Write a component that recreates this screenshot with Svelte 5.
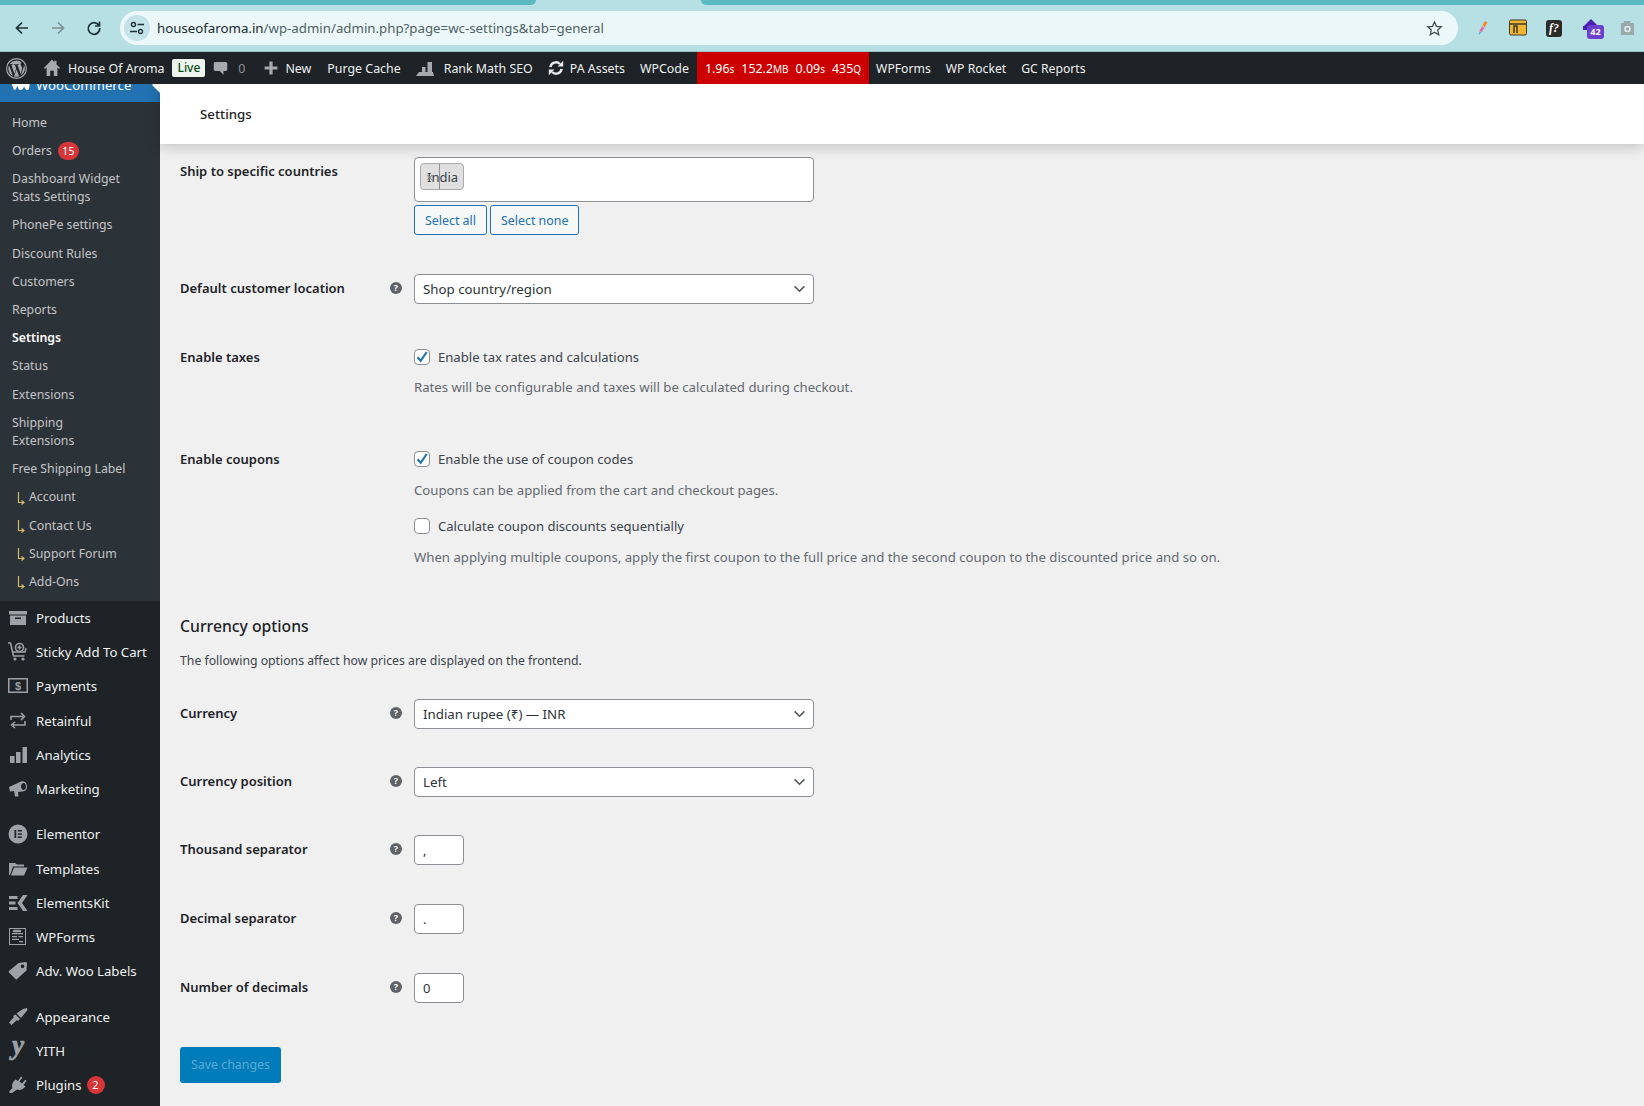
<script>
  const frame = 'fill="currentColor"';
  const line = 'fill="none" stroke="currentColor" stroke-width="1.6"';
  const sub = [
    { label: 'Home' },
    { label: 'Orders', badge: 15 },
    { label: 'Dashboard Widget Stats Settings' },
    { label: 'PhonePe settings' },
    { label: 'Discount Rules' },
    { label: 'Customers' },
    { label: 'Reports' },
    { label: 'Settings', current: true },
    { label: 'Status' },
    { label: 'Extensions' },
    { label: 'Shipping Extensions', narrow: true },
    { label: 'Free Shipping Label' },
    { label: 'Account', child: true },
    { label: 'Contact Us', child: true },
    { label: 'Support Forum', child: true },
    { label: 'Add-Ons', child: true }
  ];

  const menu = [
    { label: 'Products', icon: `<path ${frame} fill-rule="evenodd" d="M1 3h18v3.5H1z M2 7.5h16V17H2z M7 9.5h6V11H7z"/>` },
    { label: 'Sticky Add To Cart', icon: `<g ${line} stroke-width="1.1"><path d="M0 1h2.5l3 13h11M4 10h13l1-4"/><circle cx="11.5" cy="5.5" r="4"/><path d="M11.5 3.5v4M9.5 5.5h4"/></g><circle cx="7" cy="17" r="1.6" fill="currentColor"/><circle cx="15" cy="17" r="1.6" fill="currentColor"/>` },
    { label: 'Payments', icon: `<path ${frame} fill-rule="evenodd" d="M0 2h20v15H0z M1.5 3.500v12h17v-12z"/><text x="10" y="14" text-anchor="middle" font-size="11" font-weight="700" font-family="Liberation Sans" fill="currentColor">$</text>` },
    { label: 'Retainful', icon: `<path ${line} stroke-width="2" d="M3 9V5.500h12M13 2l3.500 3.500L13 9M17 10v4H5M7 11l-3.500 3L7 17"/>` },
    { label: 'Analytics', icon: `<path ${frame} d="M2 11h4.500v7H2z M8 7h4.500v11H8z M14.500 2H19v16h-4.500z"/>` },
    { label: 'Marketing', icon: `<path ${frame} fill-rule="evenodd" d="M1 8l12-5.500c1-.5 2-.5 3 0 2 1 3.500 3 3 6s-3 4-5 4l-4 .5.5 4.500H7L6 12l-4 .5z M15.500 4a2.500 3.500 0 1 0 .1 0z"/>` },
    { label: 'Elementor', gap: true, icon: `<path ${frame} fill-rule="evenodd" d="M10 .5a9.500 9.500 0 1 0 0 19 9.500 9.500 0 0 0 0-19z M6.500 6h1.700v8H6.500z M9.800 6h4v1.500h-4z M9.800 9.200h4v1.500h-4z M9.800 12.500h4V14h-4z"/>` },
    { label: 'Templates', icon: `<path ${frame} d="M1 4h6l2 1.500h7V7.500H5l-3 8.500H1z M6 8.500h13.500L16 16.500H3z"/>` },
    { label: 'ElementsKit', icon: `<path ${frame} d="M1 3h8.500v3H1z M1 8.500h6.500v3H1z M1 14h8.500v3H1z M15 2h4.500l-5.500 8 5.500 8H15l-5.500-8z"/>` },
    { label: 'WPForms', icon: `<path ${frame} fill-rule="evenodd" d="M1 1h17v17H1z M2 2v15h15V2z M4 6h11v1.200H4z M4 9h5v1.200H4z M10.500 9H15v1.200h-4.500z M4 11.800h7v1.200H4z M11 14h4v1.200h-4z"/><path ${line} stroke-width="1" d="M5 3.500l1 1 1-1 1 1 1-1 1 1 1-1 1 1 1-1"/>` },
    { label: 'Adv. Woo Labels', icon: `<path ${frame} fill-rule="evenodd" d="M1 10L10.500 2 18 1l1 1-.5 7.500L9 18c-.5.5-1 .5-1.500 0L1 11.500c-.4-.5-.4-1 0-1.500z M14.500 3.500a1.800 1.800 0 1 0 .1 0z"/>` },
    { label: 'Appearance', gap: true, icon: `<path ${frame} d="M19 1l.5 2-6.500 8-4.500-4.500L15 2z M7.500 7.500l4.500 4.500-2 2-1-1-5.500 5-2.500-2.500 5-5.500-1-1z"/>` },
    { label: 'YITH', icon: `<text x="10" y="13" text-anchor="middle" font-size="27" font-weight="700" font-style="italic" font-family="Liberation Serif" fill="currentColor" stroke="currentColor" stroke-width="0.7">y</text>` },
    { label: 'Plugins', badge: 2, icon: `<path ${frame} d="M13 1.500l1.500 1-3 4 2.500 2 3.200-3.800 1.300 1.300-3 4 2 1.500-1.500 1.500c-2 2-5 2.500-7 1.500L4 18H1.500v-2l3-3c-1-2-.5-5 1.500-7L7.500 4.500 10 6z"/>` }
  ];

  const bar = ['1.96s', '152.2MB', '0.09s', '435Q'];
</script>

{#snippet help()}
  <span class="help">?</span>
{/snippet}

{#snippet chevron()}
  <svg class="chevron" viewBox="0 0 14 9" width="13" height="8"><path d="M1.500 1.500L7 7l5.500-5.500" fill="none" stroke="#50575e" stroke-width="1.800"/></svg>
{/snippet}

{#snippet check(on)}
  <span class="checkbox">
    {#if on}
      <svg viewBox="0 0 16 16" width="16" height="16"><path d="M3.500 8.200l3.200 3.600 6-8.800" fill="none" stroke="#2271b1" stroke-width="2.200"/></svg>
    {/if}
  </span>
{/snippet}

<div class="browser">
  <div class="tabs">
    <div class="tab left"></div>
    <div class="tab right"></div>
  </div>
  <div class="toolbar">
    <svg class="nav" viewBox="0 0 16 16" width="16" height="16"><path d="M14 8H3M8 2.500L2.500 8 8 13.500" fill="none" stroke="#1f3336" stroke-width="1.700"/></svg>
    <svg class="nav" viewBox="0 0 16 16" width="16" height="16"><path d="M2 8h11M8 2.500L13.500 8 8 13.500" fill="none" stroke="#7c9093" stroke-width="1.700"/></svg>
    <svg class="nav" viewBox="0 0 16 16" width="16" height="16"><path d="M13 5.500A5.800 5.800 0 1 0 13.800 8M13.500 1.500v4.500H9" fill="none" stroke="#1f3336" stroke-width="1.700"/></svg>
    <div class="omnibox">
      <span class="site">
        <svg viewBox="0 0 16 16" width="16" height="16"><g fill="none" stroke="#1f3336" stroke-width="1.400"><circle cx="4.500" cy="4.500" r="2"/><circle cx="11.500" cy="11.500" r="2"/><path d="M8.500 4.500H15M1 11.500h7"/></g></svg>
      </span>
      <span class="url"><b>houseofaroma.in</b>/wp-admin/admin.php?page=wc-settings&amp;tab=general</span>
      <svg class="star" viewBox="0 0 18 18" width="17" height="17"><path d="M9 2l2.100 4.700 5.100.5-3.800 3.400 1.100 5L9 13l-4.500 2.600 1.100-5-3.800-3.400 5.100-.5z" fill="none" stroke="#3a4a4d" stroke-width="1.300"/></svg>
    </div>
    <div class="extensions">
      <svg viewBox="0 0 16 20" width="14" height="18"><path d="M10 2l3 2-3 5-2.500-2z" fill="#f28a1d"/><path d="M7 8l2.500 2-3 5-2.500-2z" fill="#e86aa6"/><path d="M4 14l2 1.500L3 18z" fill="#4da3e8"/></svg>
      <svg viewBox="0 0 18 18" width="18" height="18"><rect x="0.500" y="1" width="17" height="15" rx="1.500" fill="#f1b52f" stroke="#3a3a2a"/><path d="M1 5h16" stroke="#3a3a2a" stroke-width="1.500"/><path d="M5 14V7h3v7" fill="none" stroke="#3a3a2a" stroke-width="1.500"/></svg>
      <span class="fq">f?</span>
      <span class="stack">
        <svg viewBox="0 0 20 20" width="20" height="20"><path d="M10 1l7 7H3z" fill="#4a1fb0"/><path d="M2 8h16v4H2z" fill="#4a1fb0"/></svg>
        <span class="count">42</span>
      </span>
      <svg viewBox="0 0 16 20" width="15" height="19"><path d="M1 4h3V2h7v2h4v13H1z" fill="#9aa9ac"/><circle cx="8" cy="10.500" r="3.500" fill="#e6eeef"/><circle cx="8" cy="10.500" r="1.800" fill="#9aa9ac"/></svg>
    </div>
  </div>
</div>

<header class="adminbar">
  <svg class="ab-wp" viewBox="0 0 20 20" width="21" height="21"><path fill="#a7aaad" fill-rule="evenodd" d="M10 0a10 10 0 1 0 0 20 10 10 0 0 0 0-20z M10 1.100a8.900 8.900 0 1 1 0 17.800 8.900 8.900 0 0 1 0-17.800z M2.200 10c0 3.100 1.800 5.800 4.400 7L2.900 6.800A7.800 7.800 0 0 0 2.200 10z M15.300 9.800c0-1-.4-1.600-.7-2.200-.4-.6-.8-1.200-.8-1.800 0-.7.500-1.300 1.300-1.300A7.800 7.800 0 0 0 3.400 5.900h.5c.8 0 2.100-.1 2.100-.1.400 0 .5.600 0 .7l-.9.100 2.900 8.600 1.700-5.200-1.200-3.400-.8-.1c-.4 0-.4-.7 0-.6 0 0 1.300.1 2.100.1s2.100-.1 2.100-.1c.4 0 .5.600 0 .7l-.9.100 2.900 8.500.8-2.600c.3-1 .6-1.800.6-2.700z M10.100 10.700L7.700 17.600a7.800 7.800 0 0 0 4.800-.1l-.1-.1z M17 6.100c0 .3.100.6.100 1 0 .8-.2 1.600-.6 2.700l-2.400 6.900A7.800 7.800 0 0 0 17 6.100z"/></svg>
  <span class="ab-item site-name">
    <svg viewBox="0 0 20 20" width="18" height="20"><path fill="#a7aaad" fill-rule="evenodd" d="M10 .5L1 10l1.200 1L4 9.500V19h12V9.500l1.800 1.500L19 10l-4-4V2h-2.500v1.500z M8 13h4v6H8z"/></svg>
    House Of Aroma
  </span>
  <span class="live">Live</span>
  <span class="ab-item comments">
    <svg viewBox="0 0 20 20" width="15" height="20"><path fill="#a7aaad" d="M3 2h14c1 0 2 1 2 2v8c0 1-1 2-2 2h-3v5l-5-5H3c-1 0-2-1-2-2V4c0-1 1-2 2-2z"/></svg>
    <span class="muted">0</span>
  </span>
  <span class="ab-item new">
    <svg viewBox="0 0 20 20" width="16" height="16"><path fill="#a7aaad" d="M8 2h4v6h6v4h-6v6H8v-6H2V8h6z"/></svg>
    New
  </span>
  <span class="ab-item purge">Purge Cache</span>
  <span class="ab-item rank">
    <svg viewBox="0 0 20 20" width="20" height="20"><path fill="#a7aaad" d="M1 18l3-4h3V9h3.500v5h2V4H17v10h1l1 4z"/></svg>
    Rank Math SEO
  </span>
  <span class="ab-item assets">
    <svg viewBox="0 0 20 20" width="16" height="16"><path fill="none" stroke="#e8eaeb" stroke-width="3" d="M3 9a7 7 0 0 1 12-4M17 11a7 7 0 0 1-12 4"/><path fill="#e8eaeb" d="M12 8h7V1z M8 12H1v7z"/></svg>
    PA Assets
  </span>
  <span class="ab-item wpcode">WPCode</span>
  <span class="monitor">
    {#each bar as value}
      <span>{value.replace(/[a-zA-Z]+$/, '')}<small>{value.match(/[a-zA-Z]+$/)[0]}</small></span>
    {/each}
  </span>
  <span class="ab-item tail">WPForms</span>
  <span class="ab-item tail">WP Rocket</span>
  <span class="ab-item tail">GC Reports</span>
</header>

<div class="wp-wrap">
  <nav class="sidebar">
    <div class="woo">
      <svg viewBox="0 0 24 14" width="20" height="12"><path fill="#fff" d="M1 2h22c1 0 1 1 1 1l-1 8c0 1-1 2-2 2s-2 0-3-2l-1-2-2 3c-1 1-2 1-3 1s-2-1-2-2L9 8l-2 4c-1 1-3 1-3-1L1 3z"/></svg>
      <span>WooCommerce</span>
    </div>
    <ul class="submenu">
      {#each sub as item}
        <li class:current={item.current} class:child={item.child} class:narrow={item.narrow}>
          {#if item.child}
            <svg class="elbow" viewBox="0 0 8 14" width="8" height="14"><path d="M1.500 1v10.500H6M4.500 9.500L7 11.500l-2.500 2" fill="none" stroke="#d3b96a" stroke-width="1.200"/></svg>
          {/if}
          <span>{item.label}</span>
          {#if item.badge}<span class="badge">{item.badge}</span>{/if}
        </li>
      {/each}
    </ul>
    <ul class="mainmenu">
      {#each menu as item}
        <li class:gap={item.gap}>
          <svg viewBox="0 0 20 20" width="20" height="20">{@html item.icon}</svg>
          <span>{item.label}</span>
          {#if item.badge}<span class="badge">{item.badge}</span>{/if}
        </li>
      {/each}
    </ul>
  </nav>

  <main class="content">
    <div class="page-head">Settings</div>
    <form class="settings">
      <div class="row">
        <label>Ship to specific countries</label>
        <span></span>
        <div>
          <div class="multi"><span class="tag"><i>×</i>India<u></u></span></div>
          <div class="actions">
            <span class="btn">Select all</span>
            <span class="btn">Select none</span>
          </div>
        </div>
      </div>

      <div class="row r39">
        <label>Default customer location</label>
        {@render help()}
        <div class="select">Shop country/region {@render chevron()}</div>
      </div>

      <div class="row r39">
        <label>Enable taxes</label>
        <span></span>
        <div>
          <div class="option">{@render check(true)} Enable tax rates and calculations</div>
          <p class="desc">Rates will be configurable and taxes will be calculated during checkout.</p>
        </div>
      </div>

      <div class="row r48">
        <label>Enable coupons</label>
        <span></span>
        <div>
          <div class="option">{@render check(true)} Enable the use of coupon codes</div>
          <p class="desc wide">Coupons can be applied from the cart and checkout pages.</p>
          <div class="option second">{@render check(false)} Calculate coupon discounts sequentially</div>
          <p class="desc wide">When applying multiple coupons, apply the first coupon to the full price and the second coupon to the discounted price and so on.</p>
        </div>
      </div>

      <h2>Currency options</h2>
      <p class="intro">The following options affect how prices are displayed on the frontend.</p>

      <div class="row first">
        <label>Currency</label>
        {@render help()}
        <div class="select">Indian rupee (₹) — INR {@render chevron()}</div>
      </div>
      <div class="row r38">
        <label>Currency position</label>
        {@render help()}
        <div class="select">Left {@render chevron()}</div>
      </div>
      <div class="row r38">
        <label>Thousand separator</label>
        {@render help()}
        <input class="small" value="," readonly />
      </div>
      <div class="row r39">
        <label>Decimal separator</label>
        {@render help()}
        <input class="small" value="." readonly />
      </div>
      <div class="row r39">
        <label>Number of decimals</label>
        {@render help()}
        <input class="small" value="0" readonly />
      </div>

      <span class="save">Save changes</span>
    </form>
  </main>
</div>

<style>
  :global(body) {
    margin: 0;
    background: #f0f0f1;
    height: 1106px;
    overflow: hidden;
    font-family: "Noto Sans", "Open Sans", sans-serif;
    font-size: 13px;
    color: #1d2327;
  }

  .browser {
    height: 52px;
    background: #b7e0e4;
    box-sizing: border-box;
    border-bottom: 1px solid #9fc4c8;
  }

  .tabs {
    display: flex;
    justify-content: space-between;
    height: 5px;
  }

  .tab {
    background: #5cb9c2;
  }

  .tab.left {
    width: 536px;
    border-bottom-right-radius: 8px;
  }

  .tab.right {
    width: 943px;
    border-bottom-left-radius: 8px;
  }

  .toolbar {
    display: flex;
    align-items: center;
    height: 34px;
    margin-top: 6px;
    padding-left: 14px;
  }

  .nav {
    margin-right: 20px;
  }

  .nav:nth-child(3) {
    margin-right: 18px;
  }

  .omnibox {
    display: flex;
    align-items: center;
    width: 1338px;
    height: 34px;
    box-sizing: border-box;
    padding: 0 15px 0 4px;
    border-radius: 17px;
    background: #ebf7f8;
  }

  .site {
    display: flex;
    align-items: center;
    justify-content: center;
    width: 26px;
    height: 26px;
    border-radius: 50%;
    background: #c4e3e7;
    margin-right: 7px;
  }

  .url {
    flex: 1;
    font-size: 13.280px;
    color: #4f6265;
  }

  .url b {
    font-weight: 400;
    color: #1a2b2e;
  }

  .extensions {
    display: flex;
    align-items: center;
    gap: 19px;
    margin-left: 18px;
  }

  .fq {
    width: 16px;
    height: 17px;
    border-radius: 3px;
    background: #2a2a2a;
    color: #fff;
    font: italic 700 12px/17px "Liberation Serif", serif;
    text-align: center;
  }

  .stack {
    position: relative;
    display: flex;
  }

  .count {
    position: absolute;
    left: 6px;
    top: 7px;
    width: 17px;
    height: 14px;
    border-radius: 3px;
    background: #6b3fd0;
    color: #fff;
    font-size: 9px;
    font-weight: 700;
    line-height: 14px;
    text-align: center;
  }

  .adminbar {
    position: relative;
    z-index: 5;
    display: flex;
    align-items: center;
    height: 32px;
    background: #1d2327;
    color: #f0f0f1;
    font-size: 12.400px;
    white-space: nowrap;
  }

  .ab-wp {
    margin-left: 6px;
  }

  .ab-item {
    display: flex;
    align-items: center;
  }

  .site-name {
    gap: 7px;
    margin-left: 16px;
  }

  .live {
    margin-left: 8px;
    padding: 0 5px;
    height: 18px;
    line-height: 18px;
    border-radius: 2px;
    background: #edf5ee;
    color: #0a4b12;
    font-size: 12px;
    font-weight: 500;
  }

  .comments {
    gap: 10px;
    margin-left: 8px;
  }

  .muted {
    color: #8c8f94;
  }

  .new {
    gap: 6px;
    margin-left: 18px;
  }

  .purge {
    margin-left: 16px;
  }

  .rank {
    gap: 9px;
    margin-left: 14px;
  }

  .assets {
    gap: 6px;
    margin-left: 15px;
  }

  .wpcode {
    margin-left: 15px;
  }

  .monitor {
    display: flex;
    gap: 7px;
    align-items: center;
    height: 100%;
    margin-left: 8px;
    padding: 0 8px;
    background: #cc0000;
    color: #fff;
  }

  .monitor small {
    font-size: 10px;
  }

  .tail {
    margin-left: 15px;
    font-size: 12.200px;
  }

  .monitor + .tail {
    margin-left: 7px;
  }

  .wp-wrap {
    display: flex;
    height: 1022px;
    overflow: hidden;
  }

  .sidebar {
    flex: 0 0 160px;
    height: 1060px;
    margin-top: -16px;
    background: #1d2327;
    color: #f0f0f1;
  }

  .woo {
    position: relative;
    display: flex;
    align-items: center;
    gap: 6px;
    height: 34px;
    padding-left: 10px;
    background: #2271b1;
    color: #fff;
    font-size: 13.200px;
  }

  .woo::after {
    content: '';
    position: absolute;
    right: 0;
    top: 9px;
    border: 8px solid transparent;
    border-right-color: #fff;
  }

  ul {
    margin: 0;
    padding: 0;
    list-style: none;
  }

  .submenu {
    padding: 6.600px 0 4.500px;
    background: #2c3338;
    color: #c3c4c7;
  }

  .submenu li {
    display: flex;
    align-items: center;
    gap: 6px;
    padding: 5px 12px;
    line-height: 18.200px;
    font-size: 12.300px;
  }

  .submenu .narrow span {
    width: 70px;
  }

  .submenu .current {
    color: #fff;
    font-weight: 600;
  }

  .submenu .child {
    gap: 4px;
    padding-left: 17px;
  }

  .badge {
    min-width: 18px;
    height: 18px;
    padding: 0 2px;
    box-sizing: border-box;
    border-radius: 9px;
    background: #d63638;
    color: #fff;
    font-size: 11px;
    line-height: 18px;
    text-align: center;
  }

  .submenu .badge {
    padding: 0 4px;
  }

  .mainmenu li {
    display: flex;
    align-items: center;
    height: 34.250px;
    padding-left: 8px;
    font-size: 13.200px;
  }

  .mainmenu li.gap {
    margin-top: 11px;
  }

  .mainmenu svg {
    flex: none;
    margin-right: 8px;
    color: #9ca2a7;
    overflow: visible;
  }

  .mainmenu .badge {
    margin-left: 5px;
  }

  .content {
    flex: 1;
    min-width: 0;
  }

  .page-head {
    position: relative;
    height: 60px;
    padding-left: 40px;
    background: #fff;
    line-height: 60px;
    font-size: 13.300px;
    font-weight: 500;
    color: #1e1e1e;
    box-shadow: 0 2px 14px rgba(0, 0, 0, 0.22);
  }

  .settings {
    padding: 13px 0 0 20px;
  }

  .row {
    display: grid;
    grid-template-columns: 208px 26px 399.500px;
    align-items: start;
  }

  .r39 { margin-top: 39px; }
  .r48 { margin-top: 48px; }
  .r38 { margin-top: 38px; }

  label {
    line-height: 28px;
    font-size: 13px;
    font-weight: 600;
    color: #1d2327;
  }

  .help {
    width: 12px;
    height: 12px;
    margin: 8px 0 0 2px;
    border-radius: 50%;
    background: #5f6368;
    color: #fff;
    font-size: 9px;
    font-weight: 700;
    line-height: 12px;
    text-align: center;
  }

  .multi {
    height: 45px;
    box-sizing: border-box;
    padding: 5px;
    background: #fff;
    border: 1px solid #8c8f94;
    border-radius: 4px;
  }

  .tag {
    position: relative;
    display: inline-block;
    width: 44px;
    height: 27px;
    box-sizing: border-box;
    padding-left: 6px;
    background: #e0e0e0;
    border: 1px solid #aaa;
    border-radius: 4px;
    line-height: 26.500px;
    color: #3c434a;
  }

  .tag i {
    position: absolute;
    left: 5px;
    top: 0;
    font-style: normal;
    color: #888;
  }

  .tag u {
    position: absolute;
    left: 18px;
    top: 0;
    bottom: 0;
    width: 1px;
    background: #8c8f94;
  }

  .actions {
    display: flex;
    gap: 3px;
    margin-top: 3px;
  }

  .btn {
    height: 30px;
    box-sizing: border-box;
    padding: 0 10px;
    background: #f6f7f7;
    border: 1px solid #2271b1;
    border-radius: 3px;
    color: #2271b1;
    font-size: 12.400px;
    line-height: 29.500px;
  }

  .select {
    position: relative;
    height: 30px;
    box-sizing: border-box;
    padding-left: 8px;
    background: #fff;
    border: 1px solid #8c8f94;
    border-radius: 4px;
    line-height: 28px;
    font-size: 13.300px;
    color: #2c3338;
  }

  .chevron {
    position: absolute;
    right: 7px;
    top: 10px;
  }

  .option {
    display: flex;
    align-items: center;
    gap: 8px;
    height: 28px;
    font-size: 13.100px;
    color: #3c434a;
  }

  .option.second {
    margin-top: 12px;
  }

  .checkbox {
    width: 16px;
    height: 16px;
    box-sizing: border-box;
    display: flex;
    align-items: center;
    justify-content: center;
    background: #fff;
    border: 1px solid #8c8f94;
    border-radius: 4px;
  }

  .checkbox svg {
    flex: none;
  }

  .desc {
    width: 1000px;
    margin: 6px 0 0;
    line-height: 20px;
    font-size: 13.200px;
    color: #646970;
  }

  .desc.wide {
    margin-top: 7px;
  }

  h2 {
    margin: 47px 0 0;
    line-height: 24px;
    font-size: 15.750px;
    font-weight: 500;
    color: #1d2327;
  }

  .intro {
    margin: 13px 0 0;
    line-height: 20px;
    font-size: 12.250px;
    color: #3c434a;
  }

  .row.first {
    margin-top: 28px;
  }

  .small {
    width: 50px;
    height: 30px;
    box-sizing: border-box;
    padding: 0 8px;
    background: #fff;
    border: 1px solid #8c8f94;
    border-radius: 4px;
    font: inherit;
    color: #2c3338;
  }

  .save {
    display: block;
    width: 101px;
    height: 36px;
    margin-top: 44px;
    border-radius: 3px;
    background: #007cba;
    color: #5aa9d6;
    font-size: 12.400px;
    line-height: 36px;
    text-align: center;
  }
</style>
